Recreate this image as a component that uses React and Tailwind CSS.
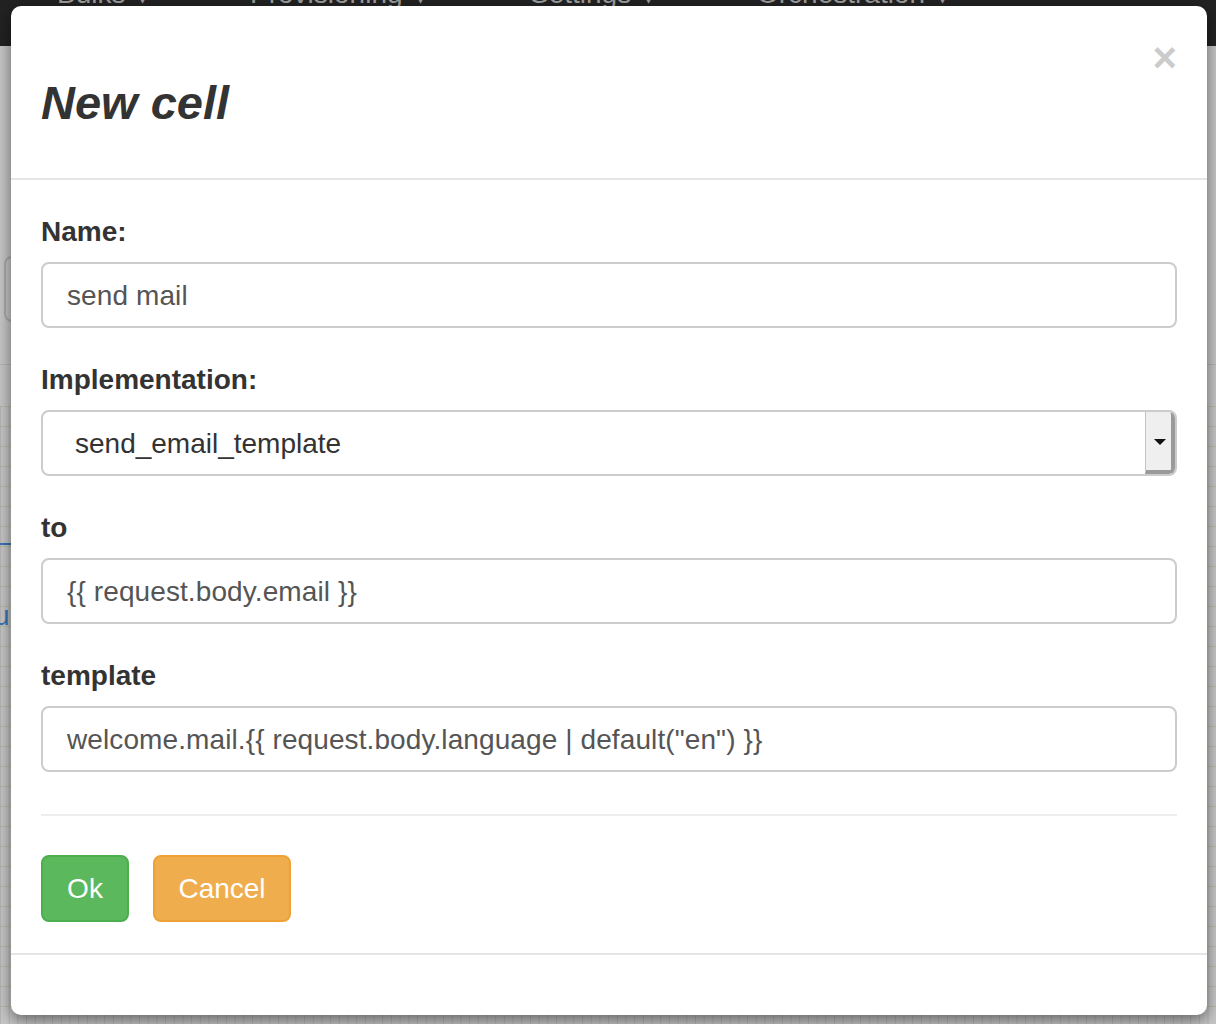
import React from "react";

function Field({ label, children, last }) {
  return (
    <div className={last ? "" : "mb-[32px]"}>
      <div className="h-[40px] leading-[40px] text-[28px] font-bold text-[#333] mb-[10px]">{label}</div>
      {children}
    </div>
  );
}

function TextInput({ value }) {
  return (
    <div className="h-[66px] border-2 border-[#cccccc] rounded-[8px] bg-white pl-[24px] pt-[2px] flex items-center text-[28px] text-[#555] whitespace-nowrap tracking-[0.1px]">
      {value}
    </div>
  );
}

function NavItem({ w, label, icon }) {
  return (
    <div className={`flex items-end shrink-0 ${w}`}>
      <div className="w-[26px] h-[10px] flex gap-[3px] items-end mr-[11px] mb-[-2px]">{icon}</div>
      <span>{label}</span>
      <span className="ml-[14px] text-[14px] leading-none mb-[8px]">▾</span>
    </div>
  );
}

export default function App() {
  return (
    <div className="relative w-[1216px] h-[1024px] overflow-hidden font-['Liberation_Sans',Arial,sans-serif] bg-[#c6c6c6]">
      {/* Background page */}
      <div className="h-[46px] bg-[#222222] overflow-hidden">
        <div className="flex pl-[20px] mt-[-26px] text-[28px] leading-[40px] text-[#9d9d9d]">
          <NavItem
            w="w-[193px]"
            label="Bulks"
            icon={
              <>
                <span className="w-[7px] h-[7px] bg-[#9d9d9d]" />
                <span className="w-[7px] h-[7px] bg-[#9d9d9d]" />
                <span className="w-[7px] h-[7px] bg-[#9d9d9d]" />
              </>
            }
          />
          <NavItem w="w-[280px]" label="Provisioning" icon={<span className="w-[26px] h-[8px] rounded-[3px] bg-[#9d9d9d]" />} />
          <NavItem
            w="w-[227px]"
            label="Settings"
            icon={
              <>
                <span className="w-[4px] h-[10px] bg-[#9d9d9d]" />
                <span className="w-[4px] h-[10px] bg-[#9d9d9d]" />
                <span className="w-[4px] h-[10px] bg-[#9d9d9d]" />
              </>
            }
          />
          <NavItem w="w-[260px]" label="Orchestration" icon={<span className="ml-[4px] w-[16px] h-[8px] rounded-[4px] bg-[#9d9d9d]" />} />
        </div>
      </div>
      <div className="h-[360px] pt-[210px]">
        <div className="ml-[4px] w-[300px] h-[66px] border-2 border-[#a9a9a9] rounded-[8px]" />
        <div className="mt-[42px] h-px bg-[#b5b5b5]" />
      </div>
      <div className="h-[618px] bg-[linear-gradient(to_bottom,#b3bea6_1px,transparent_1px)] bg-size-[100%_20px]">
        <div className="h-full bg-[linear-gradient(to_right,rgba(150,150,150,0.35)_1px,transparent_1px)] bg-size-[8.7px_100%]">
          <div className="pt-[137px]">
            <div className="h-[2px] w-[60px] bg-[#3b73b5]" />
            <div className="mt-[56px] ml-[-6px] text-[28px] leading-[30px] text-[#3b73b5]">u</div>
          </div>
        </div>
      </div>

      {/* Modal */}
      <div className="absolute left-[11px] top-[6px] w-[1196px] h-[1009px] bg-white rounded-[10px] shadow-[0_5px_15px_rgba(0,0,0,0.5)] flex flex-col">
        <div className="h-[174px] shrink-0 border-b-2 border-[#e5e5e5] flex items-start justify-between pl-[30px] pr-[30px]">
          <div className="mt-[71px] text-[47px] leading-[52px] font-bold italic text-[#333]">New cell</div>
          <div className="mt-[31px] text-[42px] leading-[42px] font-bold text-[#000] opacity-20">×</div>
        </div>

        <div className="px-[30px] pt-[32px] pb-[31px] shrink-0">
          <Field label="Name:">
            <TextInput value="send mail" />
          </Field>
          <Field label="Implementation:">
            <div className="h-[66px] border-2 border-[#cccccc] rounded-[8px] bg-white flex overflow-hidden">
              <div className="flex-1 pl-[32px] pt-[2px] flex items-center text-[28px] text-[#333]">send_email_template</div>
              <div className="w-[30px] border-l border-[#c2c2c2] border-r-[4px] border-r-[#9a9a9a] border-b-[4px] border-b-[#9a9a9a] bg-[#efefef] rounded-r-[5px] flex items-center justify-center">
                <svg width="12" height="6" viewBox="0 0 12 6" className="mt-[2px] ml-[2px]">
                  <path d="M0 0 H12 L6 6 Z" fill="#111" />
                </svg>
              </div>
            </div>
          </Field>
          <Field label="to">
            <TextInput value="{{ request.body.email }}" />
          </Field>
          <Field label="template" last>
            <TextInput value={'welcome.mail.{{ request.body.language | default("en") }}'} />
          </Field>

          <div className="mt-[42px] h-[2px] bg-[#eeeeee]" />

          <div className="mt-[39px] flex gap-[24px]">
            <div className="w-[88px] h-[67px] bg-[#5cb85c] border-2 border-[#4cae4c] rounded-[8px] text-white text-[28px] flex items-center justify-center">
              Ok
            </div>
            <div className="w-[138px] h-[67px] bg-[#f0ad4e] border-2 border-[#eea236] rounded-[8px] text-white text-[28px] flex items-center justify-center">
              Cancel
            </div>
          </div>
        </div>

        <div className="flex-1 border-t-2 border-[#e5e5e5]" />
      </div>
    </div>
  );
}
